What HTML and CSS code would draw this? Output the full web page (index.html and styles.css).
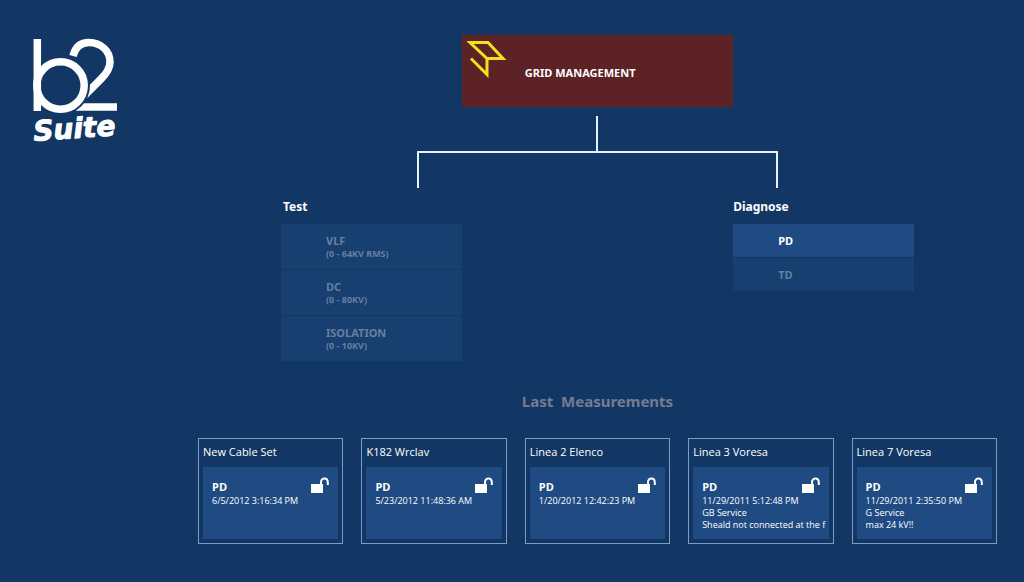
FILE: index.html
```html
<!DOCTYPE html>
<html lang="en">
<head>
<meta charset="utf-8">
<meta name="viewport" content="width=device-width, initial-scale=1">
<title>b2 Suite</title>
<link rel="stylesheet" href="styles.css">
</head>
<body>
<svg class="symbols" aria-hidden="true">
  <symbol id="unlocked" viewBox="0 0 18 17">
    <rect x="0" y="7" width="12" height="9" fill="#fff"/>
    <path d="M10 8V5.500C10 0.200 16.800 0.200 16.800 5.500V8" fill="none" stroke="#fff" stroke-width="2"/>
  </symbol>
</svg>
<div class="page">
  <header class="brand">
    <svg class="logo" viewBox="0 0 90 108" role="img" aria-label="b2 Suite">
      <g fill="none" stroke="#fff" stroke-width="7.500">
        <path d="M43 21C46 9 54 7.500 59 7.500C71 7.500 80 16 80 27C80 34 76 39 71 44L55 60"/>
        <path d="M46 72H87"/>
      </g>
      <circle cx="30.500" cy="50.500" r="29.500" fill="#133764"/>
      <circle cx="30.500" cy="50.500" r="23.700" fill="none" stroke="#fff" stroke-width="7.500"/>
      <path d="M7.300 4V76" stroke="#fff" stroke-width="7.500"/>
      <text class="logo-word" x="4" y="106" transform="rotate(-4 4 106)">Suite</text>
    </svg>
  </header>
  <main class="main">
    <section class="chart">
      <button class="root" type="button">
        <svg class="root-icon" viewBox="0 0 40 38" aria-hidden="true">
          <path d="M3 2.500H21L36 18.500H20ZM20 18.500V34.500L4 18.500" fill="none" stroke="#f3e11b" stroke-width="3"/>
        </svg>
        <span>GRID MANAGEMENT</span>
      </button>
      <div class="links" aria-hidden="true">
        <span class="link-stem"></span>
        <span class="link-fork"></span>
      </div>
      <div class="branch">
        <h2 class="branch-title">Test</h2>
        <button class="tile tall" type="button" disabled>VLF<small>(0 - 64KV RMS)</small></button>
        <button class="tile tall" type="button" disabled>DC<small>(0 - 80KV)</small></button>
        <button class="tile tall" type="button" disabled>ISOLATION<small>(0 - 10KV)</small></button>
      </div>
      <div class="branch branch-right">
        <h2 class="branch-title">Diagnose</h2>
        <button class="tile" type="button">PD</button>
        <button class="tile" type="button" disabled>TD</button>
      </div>
    </section>
    <section class="recent">
      <h2 class="recent-title">Last&nbsp; Measurements</h2>
      <div class="cards">
        <article class="card">
          <h3 class="card-title">New Cable Set</h3>
          <button class="entry" type="button"><svg class="lock"><use href="#unlocked"/></svg><b>PD</b><span>6/5/2012 3:16:34 PM</span></button>
        </article>
        <article class="card">
          <h3 class="card-title">K182 Wrclav</h3>
          <button class="entry" type="button"><svg class="lock"><use href="#unlocked"/></svg><b>PD</b><span>5/23/2012 11:48:36 AM</span></button>
        </article>
        <article class="card">
          <h3 class="card-title">Linea 2 Elenco</h3>
          <button class="entry" type="button"><svg class="lock"><use href="#unlocked"/></svg><b>PD</b><span>1/20/2012 12:42:23 PM</span></button>
        </article>
        <article class="card">
          <h3 class="card-title">Linea 3 Voresa</h3>
          <button class="entry" type="button"><svg class="lock"><use href="#unlocked"/></svg><b>PD</b><span>11/29/2011 5:12:48 PM</span><span>GB Service</span><span>Sheald not connected at the f</span></button>
        </article>
        <article class="card">
          <h3 class="card-title">Linea 7 Voresa</h3>
          <button class="entry" type="button"><svg class="lock"><use href="#unlocked"/></svg><b>PD</b><span>11/29/2011 2:35:50 PM</span><span>G Service</span><span>max 24 kV!!</span></button>
        </article>
      </div>
    </section>
  </main>
</div>
</body>
</html>
```
FILE: styles.css
```css
* {
  box-sizing: border-box;
}

body {
  margin: 0;
  background: #133764;
  color: #fff;
  font-family: "Noto Sans", "Open Sans", sans-serif;
  font-size: 11px;
}

h2,
h3 {
  margin: 0;
}

button {
  border: 0;
  color: inherit;
  font: inherit;
  text-align: left;
}

.symbols {
  position: absolute;
  width: 0;
  height: 0;
}

.page {
  display: grid;
  grid-template-columns: 168px 1fr;
  padding: 35px 27px 37px 30px;
}

.logo {
  display: block;
  width: 90px;
  height: 108px;
  overflow: visible;
}

.logo-word {
  fill: #fff;
  stroke: #fff;
  stroke-width: 1px;
  stroke-linejoin: round;
  font-size: 28px;
  font-style: italic;
  font-weight: 700;
  font-family: "DejaVu Sans", sans-serif;
}

.chart {
  display: grid;
  grid-template-columns: 2fr 3fr 2fr;
  margin: 0 83px;
}

.root {
  grid-column: 2;
  display: flex;
  gap: 18px;
  height: 72px;
  padding: 4px;
  background: #5c2225;
  border: 1px solid #67211f;
  font-weight: 700;
}

.root span {
  align-self: center;
  padding-top: 3px;
}

.root-icon {
  width: 40px;
  height: 38px;
}

.links {
  grid-column: 1 / -1;
  display: grid;
  grid-template-columns: 3fr 4fr 4fr 3fr;
  margin-top: 9px;
}

.link-stem {
  grid-column: 2;
  height: 35px;
  border-right: 2px solid #e6f2ff;
}

.link-fork {
  grid-column: 2 / 4;
  height: 37px;
  border: 2px solid #e6f2ff;
  border-bottom: 0;
}

.branch {
  grid-column: 1;
  display: flex;
  flex-direction: column;
  gap: 1px;
}

.branch-right {
  grid-column: 3;
}

.branch-title {
  padding: 9px 2px 6px;
  font-size: 12px;
  line-height: 20px;
}

.branch-right .branch-title {
  padding-left: 0;
}

.tile {
  height: 33px;
  padding: 0 0 0 45px;
  background: #1f4b82;
  font-weight: 700;
  line-height: 14px;
}

.tile:disabled {
  background: #173f70;
  color: #66809f;
}

.tall {
  height: 45px;
}

.tile small {
  display: block;
  font-size: 9px;
  line-height: 12px;
}

.recent-title {
  padding: 28px 0 25px;
  color: #767c90;
  font-size: 15px;
  line-height: 24px;
  text-align: center;
}

.cards {
  display: grid;
  grid-template-columns: repeat(5, minmax(0, 1fr));
  gap: 18px;
  font-family: "Open Sans", sans-serif;
}

.card {
  padding: 4px;
  border: 1px solid #7d9cc5;
}

.card-title {
  padding: 1px 0 7px;
  font-size: 11px;
  font-weight: 400;
  line-height: 16px;
}

.entry {
  display: grid;
  grid-template-columns: 1fr 18px;
  align-content: start;
  width: 100%;
  height: 72px;
  padding: 10px 9px 8px;
  background: #1f4b82;
}

.entry b {
  grid-area: 1 / 1;
  padding: 3px 0 1px;
  line-height: 14px;
}

.entry span {
  grid-column: 1 / -1;
  font-size: 9px;
  line-height: 12px;
  white-space: nowrap;
}

.lock {
  grid-area: 1 / 2;
  width: 18px;
  height: 17px;
}
```
